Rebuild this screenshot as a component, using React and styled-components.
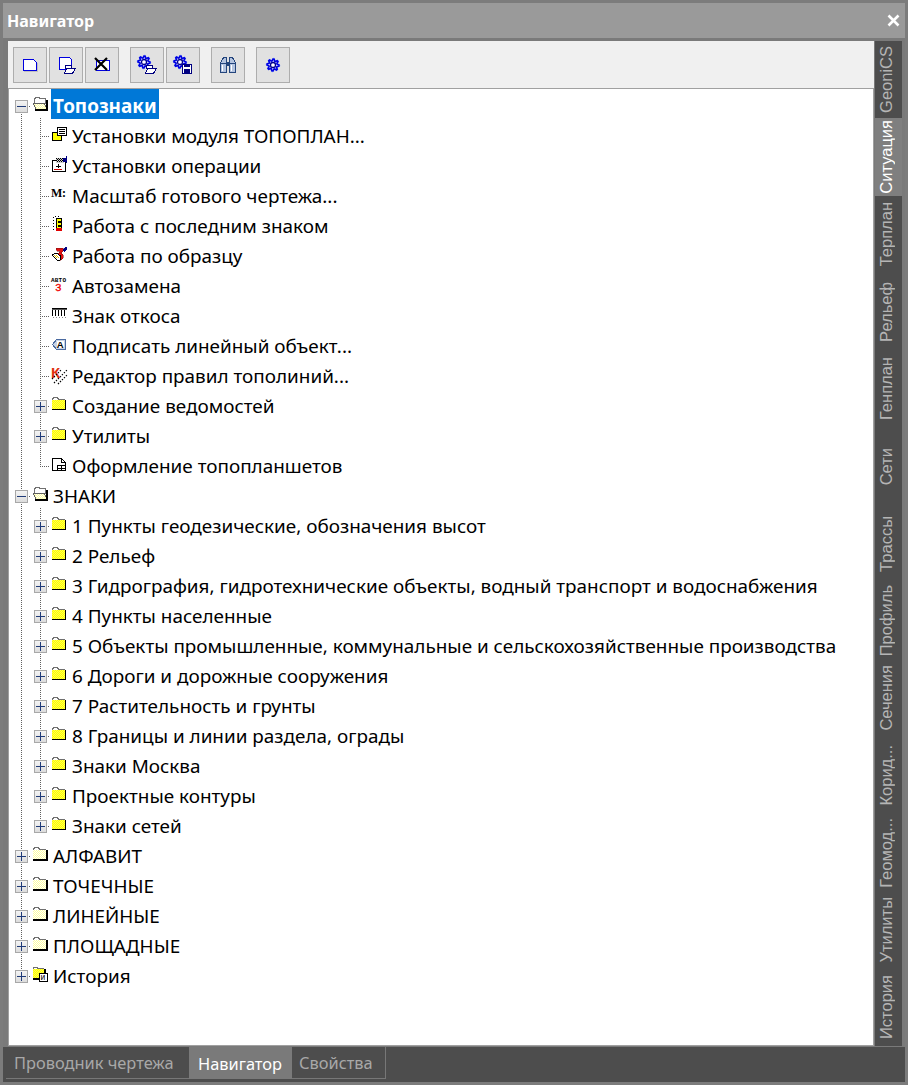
import React from "react";
import styled, { createGlobalStyle, css } from "styled-components";

const GlobalStyle = createGlobalStyle`
  html, body { margin: 0; padding: 0; background: #4d4d4d; }
  * { box-sizing: border-box; }
`;

const UI_FONT = `"Noto Sans", "Open Sans", "Liberation Sans", sans-serif`;

const Window = styled.div`
  width: 908px;
  height: 1085px;
  display: flex;
  flex-direction: column;
  background: #4d4d4d;
  border: 3px solid #7c7c7c;
  font-family: ${UI_FONT};
  overflow: hidden;
`;

const TitleBar = styled.div`
  height: 35px;
  flex: none;
  display: flex;
  align-items: center;
  justify-content: space-between;
  padding: 0 5px 0 4px;
  background: #9a9a9a;
  color: #fff;
  font-size: 16px;
  font-weight: 700;
`;

const Body = styled.div`
  flex: 1;
  min-height: 0;
  display: flex;
  gap: 1px;
  padding: 3px 3px 1px 5px;
  background: #7a7a7a;
`;

const Main = styled.div`
  flex: 1;
  min-width: 0;
  display: flex;
  flex-direction: column;
`;

const Toolbar = styled.div`
  height: 47px;
  flex: none;
  display: flex;
  align-items: center;
  padding: 0 0 0 5px;
  background: #f0f0f0;
`;

const ToolGroup = styled.div`
  display: flex;
  gap: 2px;
  margin-right: 11px;
`;

const ToolButton = styled.div`
  width: 34px;
  height: 36px;
  display: flex;
  align-items: center;
  justify-content: center;
  background: #e1e1e1;
  border: 1px solid #adadad;
`;

const Tree = styled.div`
  flex: 1;
  min-height: 0;
  padding: 2px 0 0 3px;
  background: #fff;
  border: 1px solid #a0a0a0;
`;

const Row = styled.div`
  height: 30px;
  display: flex;
  align-items: center;
  font-size: 18.9px;
  color: #000;
  white-space: nowrap;
`;

const dots = css`
  background-image: linear-gradient(to bottom, #606060 50%, transparent 50%);
  background-size: 1px 2px;
`;

const Guide = styled.div`
  position: relative;
  width: 19px;
  height: 30px;
  flex: none;
  &::before {
    content: "";
    position: absolute;
    left: 9px;
    width: 1px;
    top: ${(p) => (p.$up ? "-3px" : "15px")};
    bottom: ${(p) => (p.$down ? "0" : "15px")};
    display: ${(p) => (p.$up || p.$down ? "block" : "none")};
    ${dots}
  }
  &::after {
    content: "";
    position: absolute;
    top: 15px;
    left: 9px;
    width: 10px;
    height: 1px;
    display: ${(p) => (p.$stub ? "block" : "none")};
    background-image: linear-gradient(to right, #606060 50%, transparent 50%);
    background-size: 2px 1px;
  }
`;

const Expander = styled.div`
  position: absolute;
  z-index: 1;
  left: 3px;
  top: 9px;
  width: 13px;
  height: 13px;
  border: 1px solid #a8a8a8;
  background: linear-gradient(to bottom, #f4f4f4, #dcdcdc);
  &::before {
    content: "";
    position: absolute;
    left: 1px;
    right: 1px;
    top: 5px;
    height: 1px;
    background: #1f3a78;
  }
  &::after {
    content: "";
    position: absolute;
    top: 1px;
    bottom: 1px;
    left: 5px;
    width: 1px;
    background: #1f3a78;
    display: ${(p) => (p.$open ? "none" : "block")};
  }
`;

const IconSlot = styled.div`
  width: 16px;
  height: 16px;
  flex: none;
  margin: 0 1px 4px 1px;
  position: relative;
  background: #fff;
`;

const Label = styled.span`
  margin-left: 2px;
  padding: 0 2px 1px;
  line-height: 28px;
  color: #000;
  ${(p) =>
    p.$selected &&
    css`
      height: 30px;
      padding-bottom: 0;
      margin-top: -4px;
      line-height: 35px;
      background: #0078d7;
      color: #fff;
      font-weight: 700;
    `}
`;

const SideTabs = styled.div`
  width: 27px;
  flex: none;
  display: flex;
  flex-direction: column;
`;

const SideTab = styled.div`
  flex: 1;
  display: flex;
  align-items: center;
  justify-content: center;
  padding-right: 4px;
  background: ${(p) => (p.$active ? "#7f7f7f" : "#4d4d4d")};
  color: ${(p) => (p.$active ? "#fff" : "#b5b5b5")};
  font-family: "Liberation Sans", Arial, sans-serif;
  font-size: 16.5px;
  white-space: nowrap;
`;

const SideText = styled.span`
  writing-mode: vertical-rl;
  transform: rotate(180deg);
`;

const Footer = styled.div`
  height: 35px;
  flex: none;
  padding: 0 0 3px 3px;
  background: #4d4d4d;
`;

const FooterTabs = styled.div`
  width: 380px;
  height: 32px;
  display: flex;
  border-bottom: 1px solid #777;
  border-right: 1px solid #777;
`;

const FooterTab = styled.div`
  height: ${(p) => (p.$active ? "32px" : "31px")};
  width: ${(p) => p.$width}px;
  display: flex;
  align-items: center;
  padding-left: ${(p) => p.$pad}px;
  background: ${(p) => (p.$active ? "#7a7a7a" : "#4d4d4d")};
  color: ${(p) => (p.$active ? "#fff" : "#a8a8a8")};
  font-size: 16.4px;
  white-space: nowrap;
`;

const Svg = styled.svg`
  display: block;
  overflow: visible;
  shape-rendering: crispEdges;
`;

const Small = ({ children }) => (
  <Svg width="16" height="16" viewBox="0 0 16 16">
    {children}
  </Svg>
);

const Big = ({ children }) => (
  <Svg width="20" height="20" viewBox="0 0 20 20" fill="none">
    {children}
  </Svg>
);

// yellow checker, drawn pixel by pixel like the old 16 colour icons
function Dither({ x, y, w, h, base = "#ffff00", tint = "#ffffe0" }) {
  let d = "";
  for (let j = 0; j < h; j++) {
    for (let i = 0; i < w; i++) {
      if ((i + j) % 2 === 0) d += `M${x + i} ${y + j}h1v1h-1z`;
    }
  }
  return (
    <>
      <rect x={x} y={y} width={w} height={h} fill={base} />
      <path d={d} fill={tint} />
    </>
  );
}

const FolderClosed = ({ heavy }) => (
  <Small>
    <path d="M1 4V2h1V1h5v1h1v1h6v1z" fill="#fff" />
    <path d="M1.5 4V2.5h1v-1h4v1h1v1h6" fill="none" stroke="#707070" />
    <Dither
      x={1}
      y={4}
      w={13}
      h={9}
      base={heavy ? "#ffffa0" : "#ffff00"}
      tint={heavy ? "#ffffff" : "#ffff50"}
    />
    <rect x="1" y="13" width={heavy ? 15 : 14} height={heavy ? 2 : 1} fill="#000" />
    <rect x="14" y="4" width={heavy ? 2 : 1} height="10" fill="#000" />
  </Small>
);

const FolderOpen = () => (
  <Small>
    <path d="M2.5 7.5v-5h1v-1h4v1h6v5z" fill="#fff" stroke="#707070" />
    <path d="M1 7h11l3 6H4z" fill="#ffffc0" stroke="#606060" />
    <Dither x={4} y={8} w={8} h={4} base="#ffffa0" tint="#ffffff" />
    <rect x="3" y="13" width="13" height="2" fill="#000" />
    <rect x="14" y="4" width="2" height="9" fill="#000" />
  </Small>
);

const ModuleIcon = () => (
  <Small>
    <rect x="1.5" y="6.5" width="9" height="8" fill="#ffff00" stroke="#000" />
    <rect x="6.5" y="1.5" width="9" height="8" fill="#fff" stroke="#000" />
    <path d="M8 3.5h6M8 5.5h6M8 7.5h6" stroke="#000" />
  </Small>
);

const OperationIcon = () => (
  <Small>
    <rect x="1.5" y="4.5" width="13" height="11" fill="#fff" stroke="#000" />
    <path d="M5 2h8v5H5z" fill="#ccc" />
    <path d="M5 2.5h1M7 2.5h1M9 2.5h1M11 2.5h1M6 3.5h1M8 3.5h1M10 3.5h1M5 4.5h1M7 4.5h1M9 4.5h1M11 4.5h1M6 5.5h1M8 5.5h1M10 5.5h1" stroke="#000" />
    <path d="M7 8h1v4H7zM5 9.5h5v1H5z" fill="#000" />
    <path d="M3 13.5h8" stroke="#d00000" />
    <path d="M12 2h3v4h-3z" fill="#000080" />
    <path d="M15 0h1v7h-1z" fill="#000080" />
  </Small>
);

const ScaleIcon = () => (
  <Small>
    <text x="0" y="11" fontFamily="'Liberation Serif', serif" fontWeight="700" fontSize="12" textLength="15" fill="#000">
      M:
    </text>
  </Small>
);

const LastSignIcon = () => (
  <Small>
    <path d="M2.5 1v1M2.5 4v1M2.5 7v1M2.5 10v1M2.5 13v1M4 .5h1M7 .5h1" stroke="#000" />
    <path d="M5.5 2.5h5v3h-3v1h3v3h-3v1h3v3h-5z" fill="#ffff00" stroke="#000" />
    <rect x="5" y="12" width="6" height="3" fill="#e00000" />
  </Small>
);

const SampleIcon = () => (
  <Small>
    <path d="M5 2h7v3l-2 2 2 2v3l-2 2H6l3-3-2-3 2-3H6z" fill="#e01010" stroke="#801010" strokeWidth="0.5" />
    <path d="M1 9l4-2 5 3-1 4H6z" fill="#fff" stroke="#000" />
    <path d="M3 9h1v1H3zM5 9h1v1H5zM4 10h1v1H4zM6 10h1v1H6zM5 11h1v1H5zM7 11h1v1H7z" fill="#e0c000" />
    <path d="M12 4l2-3h2v2l-3 3z" fill="#000080" />
  </Small>
);

const AutoIcon = () => (
  <Small>
    <text x="0" y="6" fontFamily="'Liberation Mono', monospace" fontWeight="700" fontSize="6" textLength="15" fill="#000">
      АВТО
    </text>
    <text x="4" y="15" fontFamily="'Liberation Mono', monospace" fontSize="11" fill="#f00000" stroke="#f00000" strokeWidth="0.3">
      3
    </text>
  </Small>
);

const SlopeIcon = () => (
  <Small>
    <rect x="1" y="2" width="15" height="1" fill="#000" />
    <rect x="1" y="3" width="15" height="1" fill="#555" />
    <path d="M1.5 4v6M4.5 4v6M7.5 4v6M10.5 4v6M13.5 4v6" stroke="#000" />
    <path d="M2 11h1M5 11h1M8 11h1M11 11h1M14 11h1" stroke="#888" />
  </Small>
);

const CaptionIcon = () => (
  <Small>
    <path d="M1.5 8.5l4-5h9v10h-9z" fill="#c7d3e6" stroke="#4a6aa0" />
    <path d="M6 5h7v7H6z" fill="#fff" />
    <text x="5.8" y="12" fontFamily="'Liberation Sans', sans-serif" fontWeight="700" fontSize="9.5" fill="#000">
      A
    </text>
  </Small>
);

const RulesIcon = () => (
  <Small>
    <text x="0" y="12" fontFamily="'Liberation Sans', sans-serif" fontWeight="700" fontSize="15" fill="#e03010">
      К
    </text>
    <path d="M3 17L16 4M7 18L16 9M1 13L10 4" stroke="#000" strokeWidth="1.2" strokeDasharray="1.4 1.4" shapeRendering="auto" />
  </Small>
);

const SheetIcon = () => (
  <Small>
    <path d="M1.5 2.5h9l4 4v8h-13z" fill="#fff" stroke="#000" />
    <path d="M10.5 2.5v4h4" fill="none" stroke="#000" />
    <rect x="6.5" y="9.5" width="8" height="5" fill="#fff" stroke="#000" />
    <path d="M6 12h8M10.5 10v4" stroke="#000" />
  </Small>
);

const HistoryIcon = () => (
  <Small>
    <path d="M1.5 3V1.5h4v1h6V3" fill="#fff" stroke="#707070" />
    <Dither x={1} y={3} w={11} h={9} tint="#ffff50" />
    <rect x="1" y="12" width="8" height="2" fill="#000" />
    <rect x="12" y="3" width="2" height="4" fill="#000" />
    <rect x="7.5" y="7.5" width="8" height="8" fill="#fff" stroke="#000" />
    <text x="8.6" y="14" fontFamily="'Liberation Sans', sans-serif" fontSize="8.5" fill="#000">
      и
    </text>
  </Small>
);

function gearPath(cx, cy, r, teeth = 8) {
  const pts = [];
  const step = (Math.PI * 2) / (teeth * 4);
  for (let i = 0; i < teeth * 4; i++) {
    const rad = i % 4 < 2 ? r : r - 1.8;
    pts.push(`${(cx + Math.cos(i * step) * rad).toFixed(2)} ${(cy + Math.sin(i * step) * rad).toFixed(2)}`);
  }
  return `M${pts.join("L")}z`;
}

const Gear = ({ cx, cy, r = 6 }) => (
  <g shapeRendering="auto">
    <path d={gearPath(cx, cy, r + 0.8)} fill="#b8ccff" stroke="#7fa0ff" strokeWidth="0.8" />
    <path d={gearPath(cx, cy, r)} fill="#dfe8ff" stroke="#0000e0" strokeWidth="1.6" />
    <circle cx={cx} cy={cy} r={r * 0.42} fill="#fff" stroke="#000090" strokeWidth="1.3" />
  </g>
);

const OpenMark = () => (
  <>
    <path d="M9.5 13.5v-3h6v3z" fill="#fff" stroke="#000080" />
    <path d="M8.5 18.5l2-5h9l-3 5z" fill="#fff" stroke="#000080" />
  </>
);

const toolIcons = [
  [
    <Big key="a">
      <path d="M3.5 4.5h10l3 3v8h-13z" fill="#fff" stroke="#0000e0" />
      <path d="M4 16.5h14M17.5 8v8" stroke="#c0c0c0" />
    </Big>,
    <Big key="b">
      <path d="M3.5 2.5h10l2 2v10h-12z" fill="#fff" stroke="#0000e0" />
      <OpenMark />
    </Big>,
    <Big key="c">
      <path d="M4.5 5.5h13v10h-13z" fill="#fff" stroke="#0000e0" />
      <path d="M3 3l12 12M15 3L3 15" stroke="#000" strokeWidth="2.2" shapeRendering="auto" />
    </Big>,
  ],
  [
    <Big key="d">
      <Gear cx={7} cy={7} />
      <OpenMark />
    </Big>,
    <Big key="e">
      <Gear cx={7} cy={7} />
      <rect x="9.5" y="9.5" width="9" height="9" fill="#fff" stroke="#000080" />
      <rect x="11" y="14" width="6" height="5" fill="#000080" />
      <rect x="11" y="9" width="6" height="3" fill="#000080" />
    </Big>,
  ],
  [
    <Big key="f">
      <path d="M5.5 2.5h3v15h-6V8z" fill="#b4c4e0" stroke="#24457c" />
      <path d="M11.5 2.5h3l3 5.5v9.500h-6z" fill="#b4c4e0" stroke="#24457c" />
      <path d="M3 8.500h5M12 8.500h5" stroke="#24457c" />
      <path d="M9 7h2v4H9z" fill="#24457c" />
      <path d="M4.500 10v6M13.500 10v6" stroke="#fff" />
    </Big>,
  ],
  [
    <Big key="g">
      <Gear cx={10} cy={10} r={6} />
    </Big>,
  ],
];

const level0 = (label, icon, box, extra = {}) => ({ label, icon, box, level: 0, ...extra });
const level1 = (label, icon, box, extra = {}) => ({ label, icon, box, level: 1, ...extra });
const fold = <FolderClosed />;
const heavy = <FolderClosed heavy />;

const rows = [
  level0("Топознаки", <FolderOpen />, "-", { selected: true, first: true }),
  level1("Установки модуля ТОПОПЛАН...", <ModuleIcon />),
  level1("Установки операции", <OperationIcon />),
  level1("Масштаб готового чертежа...", <ScaleIcon />),
  level1("Работа с последним знаком", <LastSignIcon />),
  level1("Работа по образцу", <SampleIcon />),
  level1("Автозамена", <AutoIcon />),
  level1("Знак откоса", <SlopeIcon />),
  level1("Подписать линейный объект...", <CaptionIcon />),
  level1("Редактор правил тополиний...", <RulesIcon />),
  level1("Создание ведомостей", fold, "+"),
  level1("Утилиты", fold, "+"),
  level1("Оформление топопланшетов", <SheetIcon />, null, { last: true }),
  level0("ЗНАКИ", <FolderOpen />, "-"),
  level1("1 Пункты геодезические, обозначения высот", fold, "+"),
  level1("2 Рельеф", fold, "+"),
  level1("3 Гидрография, гидротехнические объекты, водный транспорт и водоснабжения", fold, "+"),
  level1("4 Пункты населенные", fold, "+"),
  level1("5 Объекты промышленные, коммунальные и сельскохозяйственные производства", fold, "+"),
  level1("6 Дороги и дорожные сооружения", fold, "+"),
  level1("7 Растительность и грунты", fold, "+"),
  level1("8 Границы и линии раздела, ограды", fold, "+"),
  level1("Знаки Москва", fold, "+"),
  level1("Проектные контуры", fold, "+"),
  level1("Знаки сетей", fold, "+", { last: true }),
  level0("АЛФАВИТ", heavy, "+"),
  level0("ТОЧЕЧНЫЕ", heavy, "+"),
  level0("ЛИНЕЙНЫЕ", heavy, "+"),
  level0("ПЛОЩАДНЫЕ", heavy, "+"),
  level0("История", <HistoryIcon />, "+", { last: true }),
];

const sideTabs = [
  "GeoniCS", "Ситуация", "Терплан", "Рельеф", "Генплан", "Сети", "Трассы",
  "Профиль", "Сечения", "Корид...", "Геомод...", "Утилиты", "История",
];

function TreeRow({ row }) {
  const { level, box, icon, label, selected, first, last } = row;
  return (
    <Row>
      <Guide $up={!first} $down={level === 1 || !last} $stub={level === 0}>
        {level === 0 && <Expander $open={box === "-"} />}
      </Guide>
      {level === 1 && (
        <Guide $up $down={!last} $stub>
          {box && <Expander $open={box === "-"} />}
        </Guide>
      )}
      <IconSlot>{icon}</IconSlot>
      <Label $selected={selected}>{label}</Label>
    </Row>
  );
}

export default function App() {
  return (
    <Window>
      <GlobalStyle />
      <TitleBar>
        <span>Навигатор</span>
        <svg width="13" height="13" viewBox="0 0 13 13">
          <path d="M1.5 1.5l10 10M11.5 1.5l-10 10" stroke="#fff" strokeWidth="2.6" />
        </svg>
      </TitleBar>
      <Body>
        <Main>
          <Toolbar>
            {toolIcons.map((group, i) => (
              <ToolGroup key={i}>
                {group.map((icon) => (
                  <ToolButton key={icon.key}>{icon}</ToolButton>
                ))}
              </ToolGroup>
            ))}
          </Toolbar>
          <Tree>
            {rows.map((row) => (
              <TreeRow key={row.label} row={row} />
            ))}
          </Tree>
        </Main>
        <SideTabs>
          {sideTabs.map((name) => (
            <SideTab key={name} $active={name === "Ситуация"}>
              <SideText>{name}</SideText>
            </SideTab>
          ))}
        </SideTabs>
      </Body>
      <Footer>
        <FooterTabs>
          <FooterTab $width={183} $pad={8}>Проводник чертежа</FooterTab>
          <FooterTab $active $width={103} $pad={9}>Навигатор</FooterTab>
          <FooterTab $width={93} $pad={7}>Свойства</FooterTab>
        </FooterTabs>
      </Footer>
    </Window>
  );
}
